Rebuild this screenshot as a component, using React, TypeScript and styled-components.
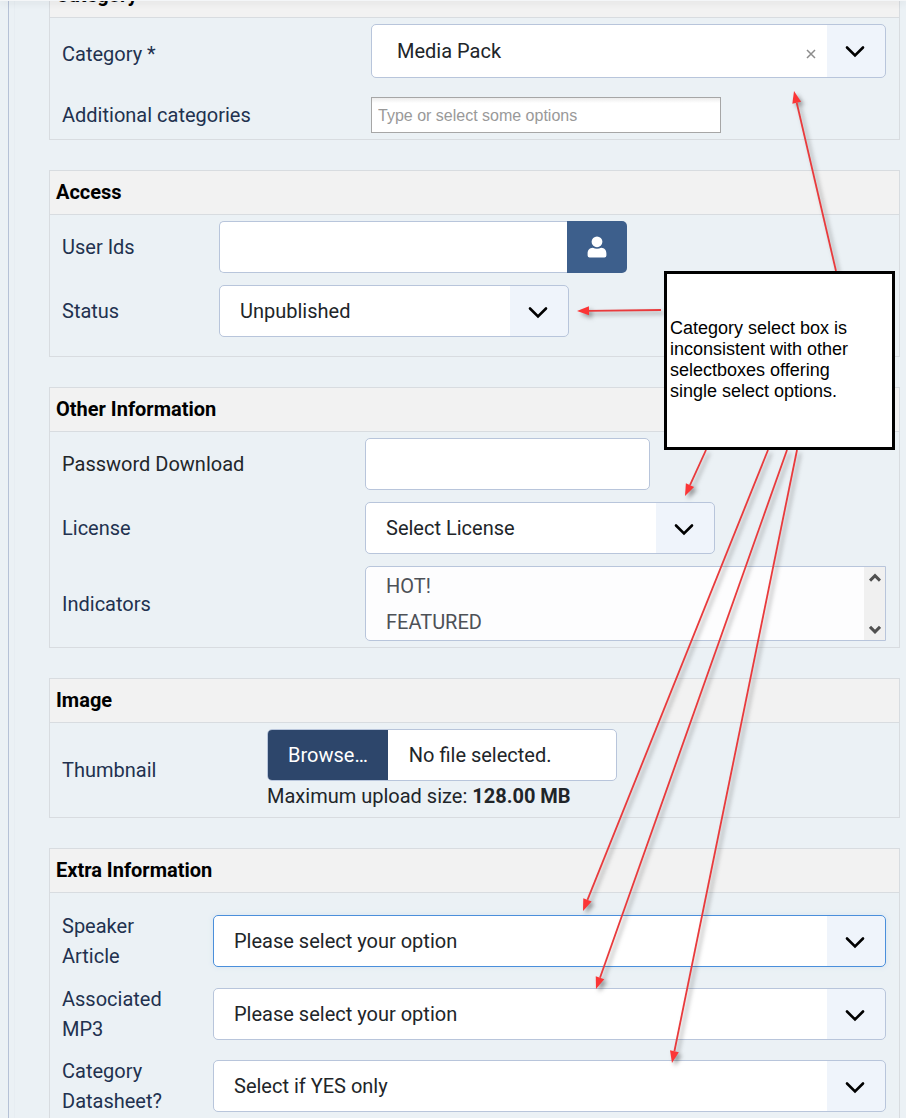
import React, { useState } from "react";
import styled, { createGlobalStyle } from "styled-components";

const GlobalStyle = createGlobalStyle`
  *, *::before, *::after { box-sizing: border-box; }
  body {
    margin: 0;
    background: #ebf1f5;
    color: #212529;
    font-family: Roboto, sans-serif;
    font-size: 20px;
    line-height: 30px;
  }
  input, select, button { font: inherit; color: inherit; margin: 0; }
`;

const Page = styled.div`
  position: relative;
  display: flex;
  height: 100vh;
  overflow: hidden;
`;

const Rail = styled.div`
  flex: none;
  width: 9px;
  border-right: 1px solid #b5c1d6;
`;

const Content = styled.main`
  flex: 1;
  min-width: 0;
  margin-left: 5px;
  padding: 0 6px 0 34px;
  border-left: 1px solid #e7edf2;
`;

/* The form is scrolled so that the first heading sits under the toolbar. */
const Form = styled.form`
  display: flex;
  flex-direction: column;
  gap: 30px;
  margin-top: -27px;
`;

const ToolbarEdge = styled.div`
  position: absolute;
  top: 0;
  left: 0;
  right: 0;
  height: 1px;
  background: #f4f6f8;
  box-shadow: 0 1px 7px rgba(0, 0, 0, 0.28);
`;

const Panel = styled.section`
  border: 1px solid #d8dce0;
`;

const PanelTitle = styled.h2`
  margin: 0;
  padding: 6px;
  height: 44px;
  border-bottom: 1px solid #d8dce0;
  background: #f2f2f2;
  color: #000;
  font-size: 20px;
  font-weight: 700;
  line-height: 30px;
`;

const PanelBody = styled.div<{ $top?: number; $bottom?: number }>`
  padding: ${(p) => p.$top ?? 0}px 13px ${(p) => p.$bottom ?? 0}px 12px;
`;

const Row = styled.div<{ $label: number; $extra?: number }>`
  display: grid;
  grid-template-columns: ${(p) => p.$label - 12}px minmax(0, 1fr);
  align-items: center;
  padding: 6px 0 ${(p) => p.$extra ?? 6}px;
`;

const Label = styled.label<{ $plain?: boolean; $drop?: boolean }>`
  padding-right: 36px;
  padding-top: ${(p) => (p.$drop ? 6 : 0)}px;
  color: ${(p) => (p.$plain ? "#22262a" : "#22314f")};
`;

const Control = styled.div<{ $width?: number }>`
  position: relative;
  width: 100%;
  max-width: ${(p) => (p.$width ? `${p.$width}px` : "none")};
`;

const TextInput = styled.input`
  display: block;
  width: 100%;
  height: 52px;
  padding: 0 20px;
  border: 1px solid #b8c5db;
  border-radius: 5px;
  background: #fff;
  outline: none;
`;

const ChosenInput = styled.input`
  display: block;
  width: 100%;
  height: 36px;
  padding: 2px 6px 0;
  border: 1px solid #a6a6a6;
  background: linear-gradient(#eee 1%, #fff 15%);
  font-family: "Liberation Sans", sans-serif;
  font-size: 16px;
  outline: none;
  &::placeholder { color: #999; opacity: 1; }
`;

const SelectBox = styled.select<{ $tall?: boolean; $active?: boolean }>`
  appearance: none;
  display: block;
  width: 100%;
  height: ${(p) => (p.$tall ? 54 : 52)}px;
  padding: 0 78px 0 ${(p) => (p.$tall ? 25 : 20)}px;
  border: 1px solid ${(p) => (p.$active ? "#4a8fdb" : "#b8c5db")};
  border-radius: 5px;
  background: linear-gradient(to left, #eff4fb 58px, #fff 58px);
  box-shadow: ${(p) => (p.$active ? "0 0 5px 1px #dde8f1" : "none")};
  outline: none;
`;

const ChevronSlot = styled.span<{ $tall?: boolean }>`
  position: absolute;
  top: ${(p) => (p.$tall ? 2 : 4)}px;
  right: 1px;
  bottom: 0;
  width: 60px;
  display: flex;
  align-items: center;
  justify-content: center;
  pointer-events: none;
`;

const ClearButton = styled.button`
  position: absolute;
  top: 20px;
  right: 65px;
  display: flex;
  align-items: center;
  justify-content: center;
  width: 20px;
  height: 20px;
  padding: 0;
  border: 0;
  background: none;
`;

const InputGroup = styled.div`
  display: flex;
`;

const UserButton = styled.button`
  flex: none;
  display: flex;
  align-items: center;
  justify-content: center;
  width: 60px;
  height: 52px;
  padding: 0;
  border: 0;
  border-radius: 0 5px 5px 0;
  background: #3d5f8c;
`;

const UserField = styled(TextInput)`
  border-right: 0;
  border-radius: 5px 0 0 5px;
`;

const ListFrame = styled.div`
  display: flex;
  height: 75px;
  border: 1px solid #b8c5db;
  border-radius: 5px 0 0 5px;
  background: #fdfdfe;
  overflow: hidden;
`;

const ListSelect = styled.select`
  appearance: none;
  flex: 1;
  min-width: 0;
  height: 73px;
  padding: 1px 0 0;
  border: 0;
  background: transparent;
  outline: none;
  overflow: hidden;
  color: #4d5157;
  option {
    height: 36px;
    min-height: 36px;
    padding: 6px 20px 0;
    line-height: 30px;
    color: #4d5157;
  }
`;

const ScrollTrack = styled.div`
  flex: none;
  display: flex;
  flex-direction: column;
  justify-content: space-between;
  width: 21px;
  background: #f0f0f0;
`;

const ScrollButton = styled.button`
  display: flex;
  align-items: center;
  justify-content: center;
  width: 21px;
  height: 21px;
  padding: 0;
  border: 0;
  background: none;
`;

const FileField = styled.label`
  display: flex;
  height: 52px;
  border: 1px solid #b8c5db;
  border-radius: 5px;
  background: #fff;
  line-height: 50px;
  overflow: hidden;
`;

const HiddenFile = styled.input`
  position: absolute;
  width: 1px;
  height: 1px;
  opacity: 0;
`;

const BrowseFace = styled.span`
  flex: none;
  padding: 0 20px;
  background: #2d466b;
  color: #fff;
`;

const FileName = styled.span`
  padding: 0 21px;
`;

const Hint = styled.div`
  white-space: nowrap;
`;

const Annotations = styled.div`
  position: absolute;
  top: 0;
  left: 0;
  pointer-events: none;
`;

const ArrowLayer = styled.svg`
  display: block;
  filter: drop-shadow(3px 3px 2px rgba(60, 60, 60, 0.5));
`;

const Note = styled.p`
  position: absolute;
  top: 271px;
  left: 664px;
  display: flex;
  align-items: center;
  width: 231px;
  height: 179px;
  margin: 0;
  padding: 0 3px 2px;
  border: 3px solid #000;
  background: #fff;
  color: #000;
  font-family: "Liberation Sans", sans-serif;
  font-size: 18px;
  line-height: 21px;
  white-space: pre;
`;

const Chevron = () => (
  <svg width="20" height="14" viewBox="0 0 20 14" fill="none" aria-hidden="true">
    <path d="M2 2.5 L10 10.5 L18 2.5" stroke="#000" strokeWidth="2.6" strokeLinecap="round" strokeLinejoin="miter" />
  </svg>
);

const ScrollArrow = ({ up }: { up?: boolean }) => (
  <svg width="12" height="9" viewBox="0 0 12 9" fill="none" aria-hidden="true">
    <path d={up ? "M1 7.6 L6 2.6 L11 7.6" : "M1 1.8 L6 6.8 L11 1.8"} stroke="#505050" strokeWidth="3" />
  </svg>
);

type SelectProps = {
  id: string;
  value: string;
  tall?: boolean;
  active?: boolean;
};

const Select = ({ id, value, tall, active }: SelectProps) => (
  <>
    <SelectBox id={id} $tall={tall} $active={active} defaultValue={value}>
      <option value={value}>{value}</option>
    </SelectBox>
    <ChevronSlot $tall={tall}>
      <Chevron />
    </ChevronSlot>
  </>
);

const HEAD = 12;
const arrows = [
  { x1: 836, y1: 271, x2: 794, y2: 91 },
  { x1: 661, y1: 310, x2: 577, y2: 311 },
  { x1: 706, y1: 450, x2: 685, y2: 496 },
  { x1: 768, y1: 450, x2: 583, y2: 911 },
  { x1: 787, y1: 450, x2: 596, y2: 989 },
  { x1: 797, y1: 450, x2: 672, y2: 1063 },
];

const Arrow = ({ x1, y1, x2, y2 }: (typeof arrows)[number]) => {
  const length = Math.hypot(x2 - x1, y2 - y1);
  const ux = (x2 - x1) / length;
  const uy = (y2 - y1) / length;
  const bx = x2 - ux * HEAD;
  const by = y2 - uy * HEAD;
  return (
    <g>
      <line x1={x1} y1={y1} x2={bx} y2={by} stroke="#e93a3c" strokeWidth="1.8" />
      <polygon
        fill="#fb3536"
        points={`${x2},${y2} ${bx - uy * 4.5},${by + ux * 4.5} ${bx + uy * 4.5},${by - ux * 4.5}`}
      />
    </g>
  );
};

export default function App() {
  const [fileName, setFileName] = useState("No file selected.");
  return (
    <>
      <GlobalStyle />
      <Page>
        <Rail />
        <Content>
          <Form>
            <Panel>
              <PanelTitle>Category</PanelTitle>
              <PanelBody>
                <Row $label={321} $extra={13}>
                  <Label htmlFor="category" $drop>Category *</Label>
                  <Control>
                    <Select id="category" value="Media Pack" tall />
                    <ClearButton type="button" aria-label="Remove item">
                      <svg width="10" height="10" viewBox="0 0 10 10" aria-hidden="true">
                        <path d="M1 1 L9 9 M9 1 L1 9" stroke="#8c8c8c" strokeWidth="1.5" />
                      </svg>
                    </ClearButton>
                  </Control>
                </Row>
                <Row $label={321}>
                  <Label htmlFor="additional">Additional categories</Label>
                  <Control $width={350}>
                    <ChosenInput id="additional" type="text" placeholder="Type or select some options" />
                  </Control>
                </Row>
              </PanelBody>
            </Panel>

            <Panel>
              <PanelTitle>Access</PanelTitle>
              <PanelBody $bottom={13}>
                <Row $label={169}>
                  <Label htmlFor="users">User Ids</Label>
                  <Control $width={408}>
                    <InputGroup>
                      <UserField id="users" type="text" />
                      <UserButton type="button" aria-label="Select user">
                        <svg width="20" height="22" viewBox="0 0 20 22" fill="#fff" aria-hidden="true">
                          <circle cx="10" cy="5.8" r="5.4" />
                          <path d="M5.8 11.8 Q10 13.6 14.2 11.8 C17.6 11.9 19.4 14.4 19.4 17.6 V19.5 Q19.4 21.5 17.4 21.5 H2.6 Q.6 21.5 .6 19.5 V17.6 C.6 14.4 2.4 11.9 5.8 11.8 Z" />
                        </svg>
                      </UserButton>
                    </InputGroup>
                  </Control>
                </Row>
                <Row $label={169}>
                  <Label htmlFor="status">Status</Label>
                  <Control $width={350}>
                    <Select id="status" value="Unpublished" />
                  </Control>
                </Row>
              </PanelBody>
            </Panel>

            <Panel>
              <PanelTitle>Other Information</PanelTitle>
              <PanelBody>
                <Row $label={315}>
                  <Label htmlFor="download" $plain>Password Download</Label>
                  <Control $width={285}>
                    <TextInput id="download" type="text" />
                  </Control>
                </Row>
                <Row $label={315}>
                  <Label htmlFor="license">License</Label>
                  <Control $width={350}>
                    <Select id="license" value="Select License" />
                  </Control>
                </Row>
                <Row $label={315}>
                  <Label htmlFor="indicators">Indicators</Label>
                  <Control>
                    <ListFrame>
                      <ListSelect id="indicators" multiple size={2}>
                        <option>HOT!</option>
                        <option>FEATURED</option>
                      </ListSelect>
                      <ScrollTrack>
                        <ScrollButton type="button" aria-label="Scroll up">
                          <ScrollArrow up />
                        </ScrollButton>
                        <ScrollButton type="button" aria-label="Scroll down">
                          <ScrollArrow />
                        </ScrollButton>
                      </ScrollTrack>
                    </ListFrame>
                  </Control>
                </Row>
              </PanelBody>
            </Panel>

            <Panel>
              <PanelTitle>Image</PanelTitle>
              <PanelBody>
                <Row $label={217}>
                  <Label htmlFor="thumbnail">Thumbnail</Label>
                  <Control $width={350}>
                    <FileField>
                      <HiddenFile
                        id="thumbnail"
                        type="file"
                        onChange={(e) => setFileName(e.target.files?.[0]?.name ?? "No file selected.")}
                      />
                      <BrowseFace>Browse…</BrowseFace>
                      <FileName>{fileName}</FileName>
                    </FileField>
                    <Hint>
                      Maximum upload size: <strong>128.00 MB</strong>
                    </Hint>
                  </Control>
                </Row>
              </PanelBody>
            </Panel>

            <Panel>
              <PanelTitle>Extra Information</PanelTitle>
              <PanelBody $top={12} $bottom={13}>
                <Row $label={163} $extra={7}>
                  <Label htmlFor="speaker">Speaker Article</Label>
                  <Control>
                    <Select id="speaker" value="Please select your option" active />
                  </Control>
                </Row>
                <Row $label={163}>
                  <Label htmlFor="mp3">Associated MP3</Label>
                  <Control>
                    <Select id="mp3" value="Please select your option" />
                  </Control>
                </Row>
                <Row $label={163}>
                  <Label htmlFor="datasheet">Category Datasheet?</Label>
                  <Control>
                    <Select id="datasheet" value="Select if YES only" />
                  </Control>
                </Row>
              </PanelBody>
            </Panel>
          </Form>
        </Content>
        <ToolbarEdge />
        <Annotations>
          <ArrowLayer width="906" height="1118" viewBox="0 0 906 1118" aria-hidden="true">
            {arrows.map((a) => (
              <Arrow key={a.y2} {...a} />
            ))}
          </ArrowLayer>
          <Note>{"Category select box is\ninconsistent with other\nselectboxes offering\nsingle select options."}</Note>
        </Annotations>
      </Page>
    </>
  );
}
